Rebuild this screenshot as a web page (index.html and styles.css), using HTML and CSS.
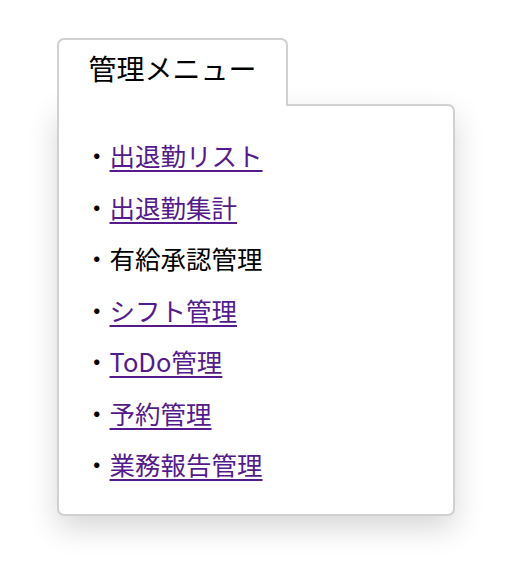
FILE: index.html
```html
<!DOCTYPE html>
<html lang="ja">
<head>
<meta charset="utf-8">
<link rel="stylesheet" href="styles.css">
</head>
<body>
<div class="wrap">
  <div class="tab">管理メニュー</div>
  <div class="panel">
    <ul class="menu">
      <li>・<a href="#">出退勤リスト</a></li>
      <li>・<a href="#">出退勤集計</a></li>
      <li>・有給承認管理</li>
      <li>・<a href="#">シフト管理</a></li>
      <li>・<a href="#">ToDo管理</a></li>
      <li>・<a href="#">予約管理</a></li>
      <li>・<a href="#">業務報告管理</a></li>
    </ul>
  </div>
</div>
</body>
</html>
```
FILE: styles.css
```css
html, body {
  margin: 0;
  padding: 0;
  background: #fff;
}
body {
  font-family: "Noto Sans CJK JP", "Noto Sans", sans-serif;
  color: #000;
  min-height: 578px;
}
.wrap {
  padding: 38px 0 0 57px;
  display: flex;
  flex-direction: column;
  align-items: flex-start;
}
.tab {
  position: relative;
  z-index: 1;
  box-sizing: border-box;
  width: 231px;
  height: 68px;
  margin-bottom: -2px;
  border: 2px solid #d0d0d0;
  border-bottom: none;
  border-radius: 7px 7px 0 0;
  background: #fff;
  font-size: 28px;
  line-height: 56px;
  text-align: center;
}
.panel {
  box-sizing: border-box;
  width: 398px;
  height: 412px;
  border: 2px solid #d0d0d0;
  border-radius: 0 7px 7px 7px;
  background: #fff;
  box-shadow: 0 12px 30px rgba(0,0,0,0.16);
}
.menu {
  list-style: none;
  margin: 0;
  padding: 23px 0 0 25px;
}
.menu li {
  font-size: 25.5px;
  line-height: 51.5px;
  height: 51.5px;
}
.menu a {
  color: #551a8b;
  text-decoration: underline;
  text-underline-offset: 4px;
}
```
